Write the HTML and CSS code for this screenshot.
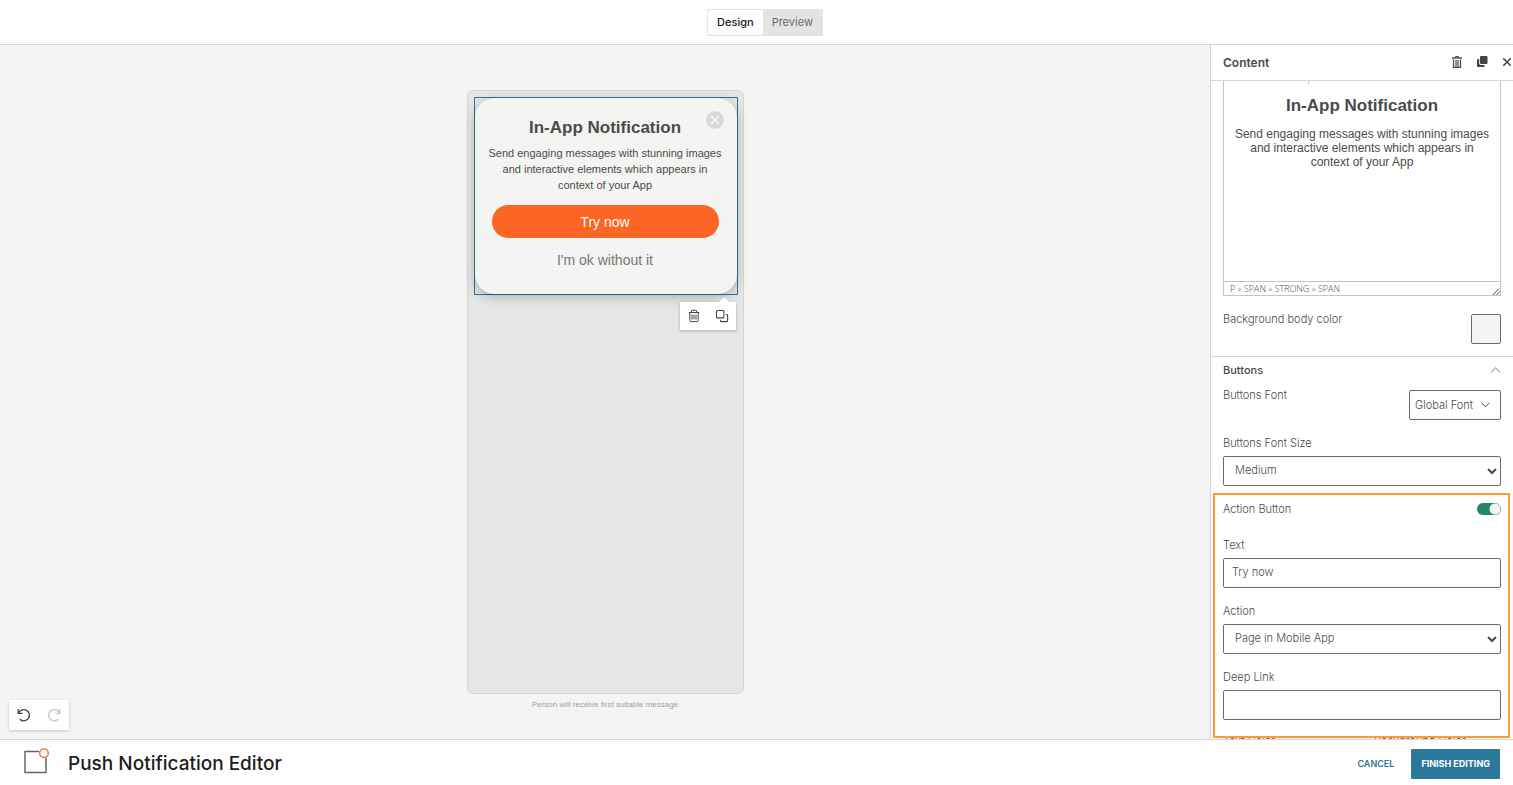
FILE: index.html
```html
<!DOCTYPE html>
<html lang="en">
<head>
    <meta charset="UTF-8">
    <meta name="viewport" content="width=device-width, initial-scale=1.0">
    <title>Push Notification Editor</title>
    <link rel="stylesheet" href="styles.css">
</head>
<body>
    <header class="topbar">
        <div class="view-switch">
            <button type="button" class="active">Design</button>
            <button type="button">Preview</button>
        </div>
    </header>

    <main class="workspace">
        <section class="stage">
            <div class="phone">
                <div class="selection">
                    <div class="card">
                        <button type="button" class="card-close" aria-label="Close">
                            <svg width="18" height="18" viewBox="0 0 18 18"><path d="M5 5l8 8M13 5l-8 8" stroke="#fff" stroke-width="1.1" fill="none"/></svg>
                        </button>
                        <h2>In-App Notification</h2>
                        <p>Send engaging messages with stunning images and interactive elements which appears in context of your App</p>
                        <button type="button" class="card-action">Try now</button>
                        <button type="button" class="card-dismiss">I'm ok without it</button>
                    </div>
                    <div class="block-tools">
                        <button type="button" aria-label="Delete">
                            <svg width="12" height="14" viewBox="0 0 12 14" fill="none" stroke="#444" stroke-width="1"><path d="M.8 3.500h10.400M3.500 3.500V2q0-.7.7-.7h3.600q.7 0 .7.7v1.500M1.800 3.500v8.200q0 .9.900.9h6.600q.9 0 .9-.9V3.500M4 5.500v5M6 5.500v5M8 5.500v5"/></svg>
                        </button>
                        <button type="button" aria-label="Duplicate">
                            <svg width="14" height="14" viewBox="0 0 14 14" fill="none" stroke="#444" stroke-width="1.1"><rect x="1.500" y="1.500" width="7.400" height="7.400" rx="1"/><path d="M10.800 5.500h1q.8 0 .8.8v5.500q0 .8-.8.8H6.300q-.8 0-.8-.8v-1"/></svg>
                        </button>
                    </div>
                </div>
            </div>
            <p class="caption">Person will receive first suitable message</p>

            <div class="history">
                <button type="button" aria-label="Undo">
                    <svg width="14" height="14" viewBox="0 0 14 14" fill="none" stroke="#444" stroke-width="1.3"><path d="M1.200 1v4.300h4.300M1.600 5.100A5.600 5.600 0 1 1 2.800 11.200"/></svg>
                </button>
                <button type="button" aria-label="Redo" disabled>
                    <svg width="14" height="14" viewBox="0 0 14 14" fill="none" stroke="#c8c8c8" stroke-width="1.3"><path d="M12.800 1v4.300H8.500M12.400 5.100A5.600 5.600 0 1 0 11.200 11.200"/></svg>
                </button>
            </div>
        </section>

        <aside class="panel">
            <div class="panel-head">
                <h3>Content</h3>
                <div class="panel-tools">
                    <button type="button" aria-label="Delete">
                        <svg width="10" height="12" viewBox="0 0 10 12" fill="none" stroke="#444"><path d="M3.500 1.500v-1h3v1"/><path d="M0 2h10" stroke-width="1.400"/><path d="M1.500 3.500v7.800h7V3.500M4 4v6.500M6 4v6.500" stroke-width="1.200"/></svg>
                    </button>
                    <button type="button" aria-label="Duplicate">
                        <svg width="12" height="12" viewBox="0 0 12 12" fill="#444"><rect x="4" y="0" width="7.500" height="8" rx="1"/><path d="M3.200 3H2Q1 3 1 4v6q0 1 1 1h5.500q1 0 1-1V8.900H4.500q-1.300 0-1.300-1.300z"/></svg>
                    </button>
                    <button type="button" aria-label="Close">
                        <svg width="10" height="10" viewBox="0 0 10 10"><path d="M1.300 1.300l7.400 7.400M8.700 1.300L1.300 8.700" stroke="#444" stroke-width="1.600"/></svg>
                    </button>
                </div>
            </div>

            <div class="panel-body">
                <div class="editor">
                    <div class="editor-text" contenteditable="true" role="textbox" aria-label="Message">
                        <h2>In-App Notification</h2>
                        <p>Send engaging messages with stunning images and interactive elements which appears in context of your App</p>
                    </div>
                    <div class="editor-path">
                        <span>P » SPAN » STRONG » SPAN</span>
                        <svg width="7" height="7" viewBox="0 0 7 7"><path d="M0 7l6-6.500M3.500 7L7 3.200" stroke="#555" fill="none"/></svg>
                    </div>
                </div>

                <div class="row row-color">
                    <label for="bodyColor">Background body color</label>
                    <button type="button" id="bodyColor" class="swatch" aria-label="Background body color"></button>
                </div>

                <div class="section-head">
                    <h4>Buttons</h4>
                    <svg width="11" height="6" viewBox="0 0 11 6"><path d="M.8 5.500l4.700-4.600 4.700 4.600" stroke="#777" fill="none"/></svg>
                </div>

                <div class="row row-font">
                    <label for="buttonsFont">Buttons Font</label>
                    <button type="button" id="buttonsFont" class="font-button">
                        Global Font
                        <svg width="9" height="6" viewBox="0 0 9 6"><path d="M.6 .8l3.900 4 3.900-4" stroke="#444" fill="none"/></svg>
                    </button>
                </div>

                <div class="field">
                    <label for="fontSize">Buttons Font Size</label>
                    <select id="fontSize"><option>Medium</option></select>
                </div>

                <div class="highlight">
                    <div class="row row-toggle">
                        <label for="actionButton">Action Button</label>
                        <input type="checkbox" id="actionButton" class="toggle" checked>
                    </div>
                    <div class="field">
                        <label for="actionText">Text</label>
                        <input type="text" id="actionText" value="Try now">
                    </div>
                    <div class="field">
                        <label for="action">Action</label>
                        <select id="action"><option>Page in Mobile App</option></select>
                    </div>
                    <div class="field">
                        <label for="deepLink">Deep Link</label>
                        <input type="text" id="deepLink">
                    </div>
                </div>

                <div class="color-labels">
                    <span>Text Color</span>
                    <span>Background Color</span>
                </div>
            </div>
        </aside>
    </main>

    <footer class="bottombar">
        <svg class="logo" width="26" height="26" viewBox="0 0 26 26" fill="none"><path d="M15 3.500H1v21h21V10" stroke="#5d6675" stroke-width="1.500"/><circle cx="20" cy="5.200" r="4.300" stroke="#fc6525" stroke-width="1.400"/></svg>
        <h1>Push Notification Editor</h1>
        <button type="button" class="cancel">CANCEL</button>
        <button type="button" class="finish">FINISH EDITING</button>
    </footer>
</body>
</html>
```
FILE: styles.css
```css
* {
    margin: 0;
    padding: 0;
    box-sizing: border-box;
}

:root {
    --text-color: #4b4b4b;
    --line-color: #d6d6d6;
    --field-border: #6b6b6b;
    --stage-color: #f4f4f2;
    --blue: #2c7899;
    --orange: #fd6524;
}

body {
    height: 100vh;
    display: flex;
    flex-direction: column;
    overflow: hidden;
    background: white;
    color: var(--text-color);
    font-family: Inter, "Liberation Sans", sans-serif;
    font-size: 11px;
    line-height: 16px;
}

button, input, select {
    font: inherit;
    color: inherit;
}

button {
    border: none;
    background: none;
    cursor: pointer;
}

svg {
    display: block;
    flex: none;
}

/* Top bar */
.topbar {
    height: 45px;
    flex: none;
    display: flex;
    justify-content: center;
    align-items: center;
    padding-left: 17px;
    border-bottom: 1px solid var(--line-color);
}

.view-switch {
    display: flex;
    padding: 1px;
    background: #e4e4e3;
    border-radius: 2px;
}

.view-switch button {
    height: 25px;
    padding: 0 9px 1px;
    border-radius: 2px;
    color: #6a6a6e;
}

.view-switch .active {
    background: white;
    color: #222;
    font-weight: 500;
}

.workspace {
    flex: 1;
    min-height: 0;
    display: flex;
}

/* Canvas with the phone */
.stage {
    flex: 1;
    position: relative;
    display: flex;
    flex-direction: column;
    align-items: center;
    padding-top: 45px;
    background: var(--stage-color);
}

.phone {
    flex: 1;
    width: 277px;
    padding: 6px 5px 6px 6px;
    background: #e6e6e6;
    border: 1px solid #d5d5d5;
    border-radius: 6px;
}

.selection {
    position: relative;
    border: 1px solid var(--blue);
}

.card {
    position: relative;
    display: flex;
    flex-direction: column;
    align-items: center;
    height: 196px;
    padding: 20px 18px 0 17px;
    border-radius: 20px;
    background: var(--stage-color);
    box-shadow: 0 3px 12px rgba(0, 0, 0, 0.25);
    font-family: "Liberation Sans", Arial, sans-serif;
    text-align: center;
}

.card h2,
.editor-text h2 {
    font-family: "Liberation Sans", Arial, sans-serif;
    font-size: 17px;
    line-height: 20px;
}

.card p {
    margin: 7px -5px 12px;
    font-size: 11px;
    line-height: 16px;
}

.card-close {
    position: absolute;
    top: 13px;
    right: 13px;
    border-radius: 50%;
    background: #d9d9d8;
}

.card-action {
    width: 100%;
    height: 33px;
    border-radius: 17px;
    background: var(--orange);
    color: white;
    font-size: 14px;
}

.card-dismiss {
    margin-top: 14px;
    color: #777;
    font-size: 14px;
}

.block-tools {
    position: absolute;
    top: 204px;
    right: 1px;
    display: flex;
    background: white;
    box-shadow: 0 1px 3px rgba(0, 0, 0, 0.25);
}

.block-tools::before {
    content: '';
    position: absolute;
    top: -5px;
    right: 7px;
    border: 5px solid transparent;
    border-top: none;
    border-bottom-color: white;
}

.block-tools button {
    width: 28px;
    height: 28px;
    display: flex;
    align-items: center;
    justify-content: center;
}

.caption {
    height: 45px;
    padding-top: 3px;
    color: #a3a3a0;
    font-family: "Liberation Sans", Arial, sans-serif;
    font-size: 8px;
}

.history {
    position: absolute;
    left: 9px;
    bottom: 9px;
    display: flex;
    background: white;
    box-shadow: 0 1px 3px rgba(0, 0, 0, 0.2);
}

.history button {
    width: 30px;
    height: 30px;
    display: flex;
    align-items: center;
    justify-content: center;
}

/* Settings panel */
.panel {
    width: 303px;
    flex: none;
    display: flex;
    flex-direction: column;
    border-left: 1px solid var(--line-color);
    font-weight: 300;
}

.panel-head {
    height: 36px;
    flex: none;
    display: flex;
    align-items: center;
    justify-content: space-between;
    padding: 0 1px 0 12px;
    border-bottom: 1px solid var(--line-color);
}

.panel-head h3 {
    font-size: 12px;
    font-weight: 600;
}

.panel-tools {
    display: flex;
    align-items: center;
    gap: 14px;
    padding-bottom: 2px;
}

.panel-body {
    flex: 1;
    min-height: 0;
    overflow: hidden;
}

.editor {
    margin: 0 12px;
    border: 1px solid #c5c5c5;
    border-top: none;
}

/* end of the toolbar divider above the text */
.editor::before {
    content: '';
    display: block;
    width: 1px;
    height: 3px;
    margin-left: 84px;
    background: #c5c5c5;
}

.editor-text {
    height: 197px;
    padding: 12px 8px 0;
    outline: none;
    font-family: "Liberation Sans", Arial, sans-serif;
    font-size: 12px;
    font-weight: 400;
    line-height: 14px;
    text-align: center;
}

.editor-text p {
    margin-top: 11px;
}

.editor-path {
    height: 14px;
    display: flex;
    align-items: flex-end;
    justify-content: space-between;
    padding-left: 6px;
    border-top: 1px solid #c5c5c5;
    font-family: "Open Sans", sans-serif;
    font-size: 9px;
    line-height: 13px;
}

.row {
    display: flex;
    justify-content: space-between;
    align-items: flex-start;
    padding: 0 12px;
}

.row-color {
    padding-top: 15px;
    padding-bottom: 12px;
    border-bottom: 1px solid var(--line-color);
}

.swatch {
    width: 30px;
    height: 30px;
    margin-top: 3px;
    border: 1px solid var(--field-border);
    border-radius: 2px;
    background: var(--stage-color);
}

.section-head {
    display: flex;
    justify-content: space-between;
    align-items: center;
    padding: 5px 12px;
}

.section-head h4 {
    font-size: 11px;
    font-weight: 500;
}

.row-font {
    padding-top: 4px;
    padding-bottom: 15px;
}

.font-button {
    height: 30px;
    display: flex;
    align-items: center;
    gap: 8px;
    margin-top: 3px;
    padding: 0 10px 0 5px;
    border: 1px solid var(--field-border);
    border-radius: 2px;
}

.field {
    padding: 0 12px;
}

.field label {
    display: block;
    margin-bottom: 5px;
}

.field input,
.field select {
    display: block;
    width: 100%;
    height: 30px;
    padding: 0 8px 2px;
    border: 1px solid var(--field-border);
    border-radius: 2px;
    background: white;
}

.field select {
    padding: 0 7px 2px;
}

.highlight {
    position: relative;
    z-index: 1;
    margin: 7px 3px 0 2px;
    padding: 6px 0 16px;
    border: 2px solid #ff9933;
}

.highlight .row,
.highlight .field {
    padding-left: 8px;
    padding-right: 7px;
}

.highlight .field {
    margin-top: 15px;
}

.highlight .row-toggle {
    align-items: center;
    margin-bottom: 20px;
}

.toggle {
    appearance: none;
    width: 24px;
    height: 12px;
    border-radius: 6px;
    background: radial-gradient(circle at 18px 6px, #f5f5f5 5px, transparent 6px) #23875f;
}

.color-labels {
    display: grid;
    grid-template-columns: 1fr 1fr;
    gap: 24px;
    margin-top: -5px;
    padding: 0 12px;
}

/* Bottom bar */
.bottombar {
    height: 46px;
    flex: none;
    display: flex;
    align-items: center;
    padding: 2px 13px 0 24px;
    border-top: 1px solid var(--line-color);
}

.logo {
    align-self: flex-start;
    margin-top: 6px;
}

.bottombar h1 {
    flex: 1;
    margin-left: 18px;
    color: #1d1d1d;
    font-size: 19px;
    font-weight: 500;
    line-height: 24px;
}

.cancel,
.finish {
    height: 30px;
    font-size: 9px;
    font-weight: 600;
}

.cancel {
    margin-right: 17px;
    color: var(--blue);
}

.finish {
    padding: 0 10px;
    border-radius: 1px;
    background: var(--blue);
    color: white;
    font-weight: 700;
}
```
